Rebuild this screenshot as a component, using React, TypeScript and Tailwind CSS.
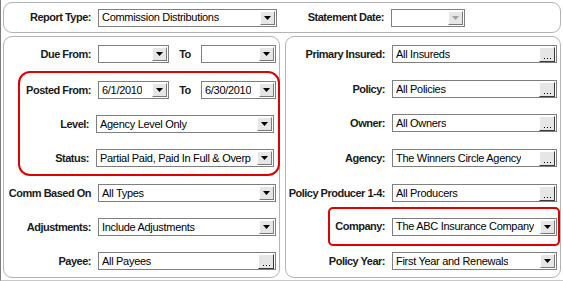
import type { ReactNode } from 'react'

const font = { fontFamily: '"Liberation Sans", Arial, sans-serif' }

function Arrow({ disabled = false }: { disabled?: boolean }) {
  return (
    <span className="flex h-[14px] w-[15px] shrink-0 items-center justify-center border border-t-white border-l-white border-r-[#7a7a7a] border-b-[#7a7a7a] bg-[#e6e6e6]">
      <svg width="7" height="4" viewBox="0 0 7 4">
        <path d="M0 0h7L3.5 4z" fill={disabled ? '#a0a0a0' : '#000'} />
      </svg>
    </span>
  )
}

function Dots() {
  return (
    <span className="flex h-[15px] w-[16px] shrink-0 items-end justify-center border border-t-white border-l-white border-r-[#3a3a3a] border-b-[#3a3a3a] bg-[#e6e6e6] pb-[2px]">
      <svg width="7" height="1" viewBox="0 0 7 1">
        <path d="M0 0h1v1H0zM3 0h1v1H3zM6 0h1v1H6z" fill="#000" />
      </svg>
    </span>
  )
}

function Field({
  value = '',
  width,
  kind = 'select',
  disabled = false,
}: {
  value?: string
  width: string
  kind?: 'select' | 'lookup'
  disabled?: boolean
}) {
  return (
    <div
      className={`flex h-[18px] shrink-0 items-center justify-between gap-[2px] border border-[#7f7f7f] bg-white pl-[3px] pr-px ${width}`}
    >
      <span className="min-w-0 overflow-hidden whitespace-nowrap text-[11px] leading-none tracking-[-0.3px] text-black">
        {value}
      </span>
      {kind === 'select' ? <Arrow disabled={disabled} /> : <Dots />}
    </div>
  )
}

function Label({ children, w }: { children: ReactNode; w: string }) {
  return (
    <span
      className={`shrink-0 whitespace-nowrap pr-[7px] text-right text-[11px] font-bold tracking-[-0.5px] text-[#1a1a1a] ${w}`}
    >
      {children}
    </span>
  )
}

function Row({
  label,
  children,
  w,
  className = '',
}: {
  label: string
  children: ReactNode
  w: string
  className?: string
}) {
  return (
    <div className={`flex h-[18px] items-center ${className}`}>
      <Label w={w}>{label}</Label>
      {children}
    </div>
  )
}

function FromTo({ label, from = '', to = '' }: { label: string; from?: string; to?: string }) {
  return (
    <Row label={label} w="w-[94px]">
      <Field value={from} width="w-[71px]" />
      <span className="w-[32px] text-center text-[11px] font-bold tracking-[-0.45px] text-[#1a1a1a]">To</span>
      <Field value={to} width="w-[75px]" />
    </Row>
  )
}

export default function App() {
  return (
    <div
      style={font}
      className="h-[281px] w-[563px] overflow-hidden border-b border-l border-b-[#c8c8c8] border-l-[#7a7a7a] bg-white"
    >
      <div className="ml-[2px] mt-[2px] flex h-[31px] w-[558px] items-center rounded-[9px] border border-[#b4b4b4]">
        <Label w="w-[94px]">Report Type:</Label>
        <Field value="Commission Distributions" width="w-[179px]" />
        <span className="w-[114px] whitespace-nowrap pr-[7px] text-right text-[11px] font-bold tracking-[-0.5px] text-[#1a1a1a]">
          Statement Date:
        </span>
        <Field width="w-[74px]" disabled />
      </div>

      <div className="ml-[2px] mt-[3px] flex gap-[5px]">
        <div className="flex h-[242px] w-[277px] flex-col rounded-[9px] border border-[#b4b4b4] pt-[8px]">
          <FromTo label="Due From:" />
          <div className="ml-[14px] mt-[8px] flex h-[105px] w-[262px] flex-col gap-[16px] rounded-[12px] border-2 border-[#e00000] pt-[8px]">
            <div className="-ml-[16px]">
              <FromTo label="Posted From:" from="6/1/2010" to="6/30/2010" />
            </div>
            <Row label="Level:" w="w-[78px]" className="-ml-[2px]">
              <Field value="Agency Level Only" width="w-[178px]" />
            </Row>
            <Row label="Status:" w="w-[78px]" className="-ml-[2px]">
              <Field value="Partial Paid, Paid In Full & Overp" width="w-[178px]" />
            </Row>
          </div>
          <Row label="Comm Based On" w="w-[94px]" className="mt-[8px]">
            <Field value="All Types" width="w-[178px]" />
          </Row>
          <Row label="Adjustments:" w="w-[94px]" className="mt-[16px]">
            <Field value="Include Adjustments" width="w-[178px]" />
          </Row>
          <Row label="Payee:" w="w-[94px]" className="mt-[16px]">
            <Field value="All Payees" width="w-[178px]" kind="lookup" />
          </Row>
        </div>

        <div className="flex h-[242px] w-[276px] flex-col rounded-[9px] border border-[#b4b4b4] pt-[8px]">
          <Row label="Primary Insured:" w="w-[106px]">
            <Field value="All Insureds" width="w-[165px]" kind="lookup" />
          </Row>
          <Row label="Policy:" w="w-[106px]" className="mt-[17px]">
            <Field value="All Policies" width="w-[165px]" kind="lookup" />
          </Row>
          <Row label="Owner:" w="w-[106px]" className="mt-[16px]">
            <Field value="All Owners" width="w-[165px]" kind="lookup" />
          </Row>
          <Row label="Agency:" w="w-[106px]" className="mt-[17px]">
            <Field value="The Winners Circle Agency" width="w-[165px]" kind="lookup" />
          </Row>
          <Row label="Policy Producer 1-4:" w="w-[106px]" className="mt-[17px]">
            <Field value="All Producers" width="w-[165px]" kind="lookup" />
          </Row>
          <div className="ml-[42px] mt-[5px] flex h-[39px] w-[232px] items-center rounded-[5px] border-2 border-[#e00000]">
            <Label w="w-[62px]">Company:</Label>
            <Field value="The ABC Insurance Company" width="w-[165px]" />
          </div>
          <Row label="Policy Year:" w="w-[106px]" className="mt-[6px]">
            <Field value="First Year and Renewals" width="w-[165px]" />
          </Row>
        </div>
      </div>
    </div>
  )
}
